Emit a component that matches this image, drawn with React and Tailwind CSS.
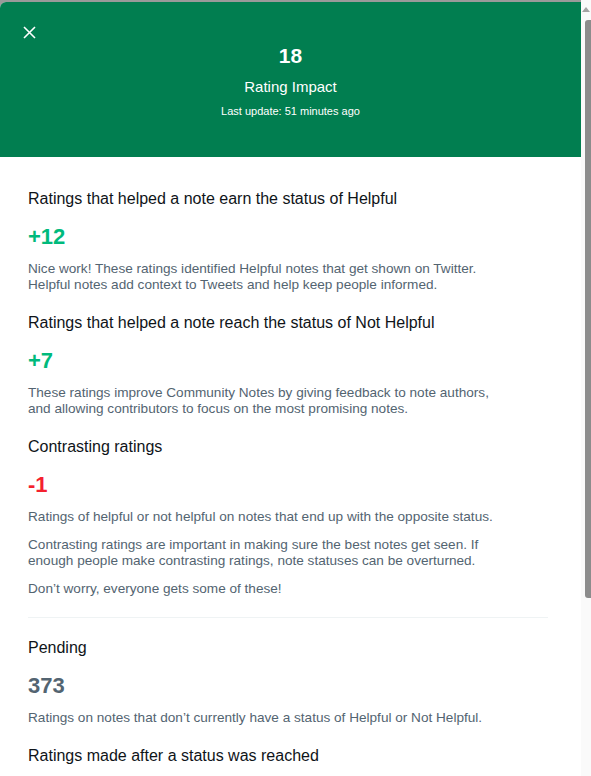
import React from "react";

const sections = [
  {
    title: "Ratings that helped a note earn the status of Helpful",
    value: "+12",
    color: "text-[#00ba7c]",
    paragraphs: [
      "Nice work! These ratings identified Helpful notes that get shown on Twitter. Helpful notes add context to Tweets and help keep people informed.",
    ],
  },
  {
    title: "Ratings that helped a note reach the status of Not Helpful",
    value: "+7",
    color: "text-[#00ba7c]",
    paragraphs: [
      "These ratings improve Community Notes by giving feedback to note authors, and allowing contributors to focus on the most promising notes.",
    ],
  },
  {
    title: "Contrasting ratings",
    value: "-1",
    color: "text-[#f4212e]",
    paragraphs: [
      "Ratings of helpful or not helpful on notes that end up with the opposite status.",
      "Contrasting ratings are important in making sure the best notes get seen. If enough people make contrasting ratings, note statuses can be overturned.",
      "Don\u2019t worry, everyone gets some of these!",
    ],
  },
];

function Section({ title, value, color, paragraphs }) {
  return (
    <div>
      <h3 className="text-[16px] leading-5 text-[#0f1419]">{title}</h3>
      <div className={`mt-3.5 text-[22px] leading-7 font-bold ${color}`}>
        {value}
      </div>
      <div className="mt-2.5 flex flex-col gap-3 pr-[50px] text-[13.6px] leading-4 text-[#536471]">
        {paragraphs.map((p) => (
          <p key={p}>{p}</p>
        ))}
      </div>
    </div>
  );
}

export default function App() {
  return (
    <div
      className="flex h-[776px] w-[591px] overflow-hidden bg-white"
      style={{ fontFamily: '"Liberation Sans", Arial, sans-serif' }}>
      {/* dialog */}
      <div className="w-[581px] bg-[#9a9a9a] pt-[2px]">
        <div className="h-full rounded-tl-md bg-white">
          <div className="relative flex h-[155px] flex-col items-center rounded-tl-md bg-[#017e50] pt-[42px] text-white">
            <button className="absolute left-[23px] top-[24px]">
              <svg width="13" height="13" viewBox="0 0 13 13">
                <path
                  d="M1 1 L12 12 M12 1 L1 12"
                  stroke="white"
                  strokeWidth="1.6"
                  fill="none"
                />
              </svg>
            </button>
            <div className="text-[21px] leading-6 font-bold">18</div>
            <div className="mt-[9px] text-[15px] leading-5">Rating Impact</div>
            <div className="mt-[6px] text-[11px] leading-4">
              Last update: 51 minutes ago
            </div>
          </div>

          <div className="flex w-[548px] flex-col gap-5 pl-7 pt-8">
            {sections.map((s) => (
              <Section key={s.title} {...s} />
            ))}
            <div className="h-px bg-[#eff3f4]" />
            <Section
              title="Pending"
              value="373"
              color="text-[#536471]"
              paragraphs={[
                "Ratings on notes that don\u2019t currently have a status of Helpful or Not Helpful.",
              ]}
            />
            <h3 className="text-[16px] leading-5 text-[#0f1419]">
              Ratings made after a status was reached
            </h3>
          </div>
        </div>
      </div>

      {/* scrollbar */}
      <div className="flex w-[10px] flex-col items-center bg-[#fafafa]">
        <svg width="8" height="6" viewBox="0 0 8 6" className="mt-[7px]">
          <path d="M4 0 L8 5 L0 5 Z" fill="#a3a3a3" />
        </svg>
        <div className="mt-[7px] ml-[4px] h-[578px] w-[7px] rounded-l-[3px] bg-[#8c8c8c]" />
      </div>
    </div>
  );
}
